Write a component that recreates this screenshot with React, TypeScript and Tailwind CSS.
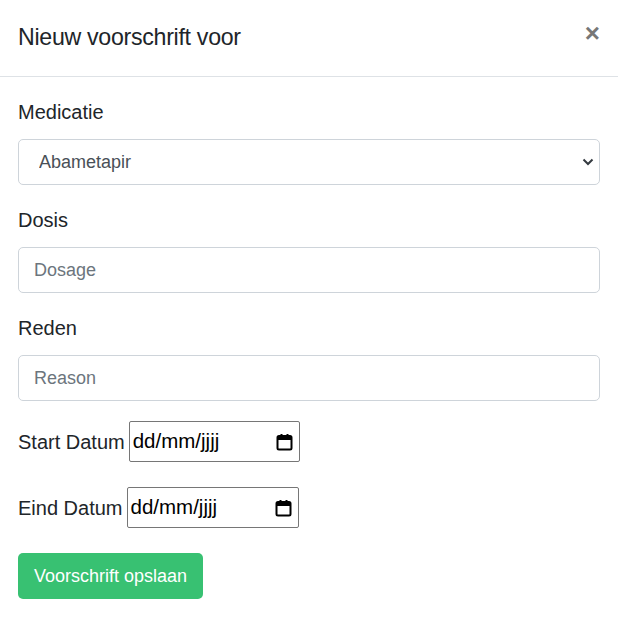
import React from "react";

const CalendarIcon = () => (
  <svg width="17" height="18" viewBox="0 0 17 18" fill="none">
    <rect x="1.5" y="3" width="14" height="13.5" rx="1.5" stroke="#000" strokeWidth="2" />
    <rect x="1.5" y="3" width="14" height="4" fill="#000" />
    <rect x="4.5" y="1" width="2" height="3" fill="#000" />
    <rect x="10.5" y="1" width="2" height="3" fill="#000" />
  </svg>
);

const DateField = ({ label, width }: { label: string; width: string }) => (
  <div className="flex items-center">
    <span className="text-[20px] text-[#212529] mr-[4px]">{label}</span>
    <div
      className={`${width} h-[41px] border border-[#767676] rounded-[2px] flex items-center justify-between pl-[3px] pr-[6px]`}
    >
      <span className="text-[20.5px] text-black">dd/mm/jjjj</span>
      <CalendarIcon />
    </div>
  </div>
);

export default function App() {
  return (
    <div className="w-[618px] h-[617px] bg-white font-['Liberation_Sans',Arial,sans-serif] text-[#212529]">
      <div className="h-[77px] border-b border-[#dee2e6] flex items-start justify-between px-[18px] pt-[21px]">
        <h5 className="text-[23.2px] leading-[32px] tracking-[-0.3px]">Nieuw voorschrift voor</h5>
        <button className="text-[#777] text-[26px] font-bold leading-none mt-[-1px] mr-[0px]">×</button>
      </div>

      <div className="px-[18px] pt-[20px]">
        <div className="mb-[20px]">
          <label className="block text-[20px] mb-[12px] leading-[30px]">Medicatie</label>
          <div className="relative">
            <select className="w-full h-[46px] border border-[#ced4da] rounded-[5px] pl-[20px] text-[18px] text-[#495057] appearance-none bg-white">
              <option>Abametapir</option>
            </select>
            <svg className="absolute right-[6px] top-[18px]" width="12" height="10" viewBox="0 0 12 10">
              <path d="M1.5 2.5 L6 7 L10.5 2.5" stroke="#343a40" strokeWidth="2" fill="none" />
            </svg>
          </div>
        </div>

        <div className="mb-[20px]">
          <label className="block text-[20px] mb-[12px] leading-[30px]">Dosis</label>
          <input
            className="w-full h-[46px] border border-[#ced4da] rounded-[5px] px-[15px] text-[18px] placeholder:text-[#6c757d]"
            placeholder="Dosage"
          />
        </div>

        <div className="mb-[20px]">
          <label className="block text-[20px] mb-[12px] leading-[30px]">Reden</label>
          <input
            className="w-full h-[46px] border border-[#ced4da] rounded-[5px] px-[15px] text-[18px] placeholder:text-[#6c757d]"
            placeholder="Reason"
          />
        </div>

        <div className="flex flex-col gap-[25px]">
          <DateField label="Start Datum" width="w-[171px]" />
          <DateField label="Eind Datum" width="w-[172px]" />
        </div>

        <button className="mt-[25px] h-[46px] px-[16px] bg-[#38c172] text-white text-[18px] rounded-[5px]">
          Voorschrift opslaan
        </button>
      </div>
    </div>
  );
}
